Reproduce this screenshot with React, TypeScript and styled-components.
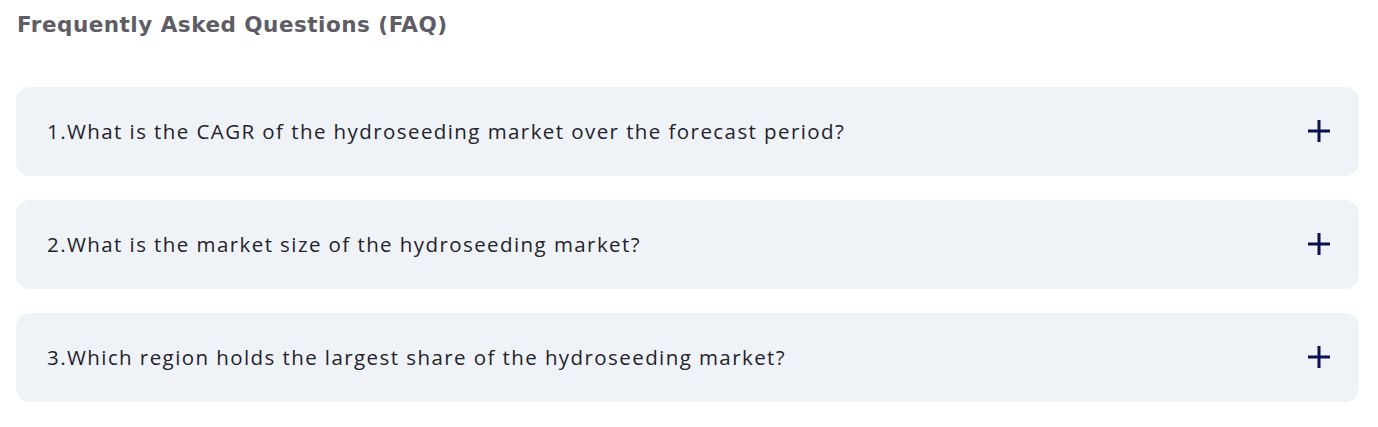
import React from "react";
import styled, { createGlobalStyle } from "styled-components";

const Global = createGlobalStyle`
  html, body { margin: 0; padding: 0; background: #ffffff; }
  * { box-sizing: border-box; }
`;

const Page = styled.div`
  padding: 8px 19px 0 16px;
  font-family: "Open Sans", "Noto Sans", sans-serif;
`;

const Title = styled.h2`
  margin: 0 0 0 1px;
  font-family: "DejaVu Sans", "Open Sans", sans-serif;
  font-weight: 700;
  font-size: 21.5px;
  line-height: 33px;
  letter-spacing: 0.5px;
  color: #5e5d65;
`;

const List = styled.div`
  margin-top: 46px;
  display: flex;
  flex-direction: column;
  gap: 24px;
`;

const Item = styled.div`
  height: 89px;
  background: #eff2f7;
  border-radius: 14px;
  display: flex;
  align-items: center;
  justify-content: space-between;
  padding: 0 29px 1px 31px;
`;

const Question = styled.span`
  font-family: "Open Sans", "Noto Sans", sans-serif;
  font-size: 20.5px;
  letter-spacing: 1.42px;
  color: #23232b;
`;

const Plus = () => (
  <svg width="22" height="22" viewBox="0 0 22 22">
    <path d="M11 0v22M0 11h22" stroke="#0b1150" strokeWidth="3" fill="none" />
  </svg>
);

const questions = [
  "1.What is the CAGR of the hydroseeding market over the forecast period?",
  "2.What is the market size of the hydroseeding market?",
  "3.Which region holds the largest share of the hydroseeding market?",
];

export default function App() {
  return (
    <>
      <Global />
      <Page>
        <Title>Frequently Asked Questions (FAQ)</Title>
        <List>
          {questions.map((q) => (
            <Item key={q}>
              <Question>{q}</Question>
              <Plus />
            </Item>
          ))}
        </List>
      </Page>
    </>
  );
}
